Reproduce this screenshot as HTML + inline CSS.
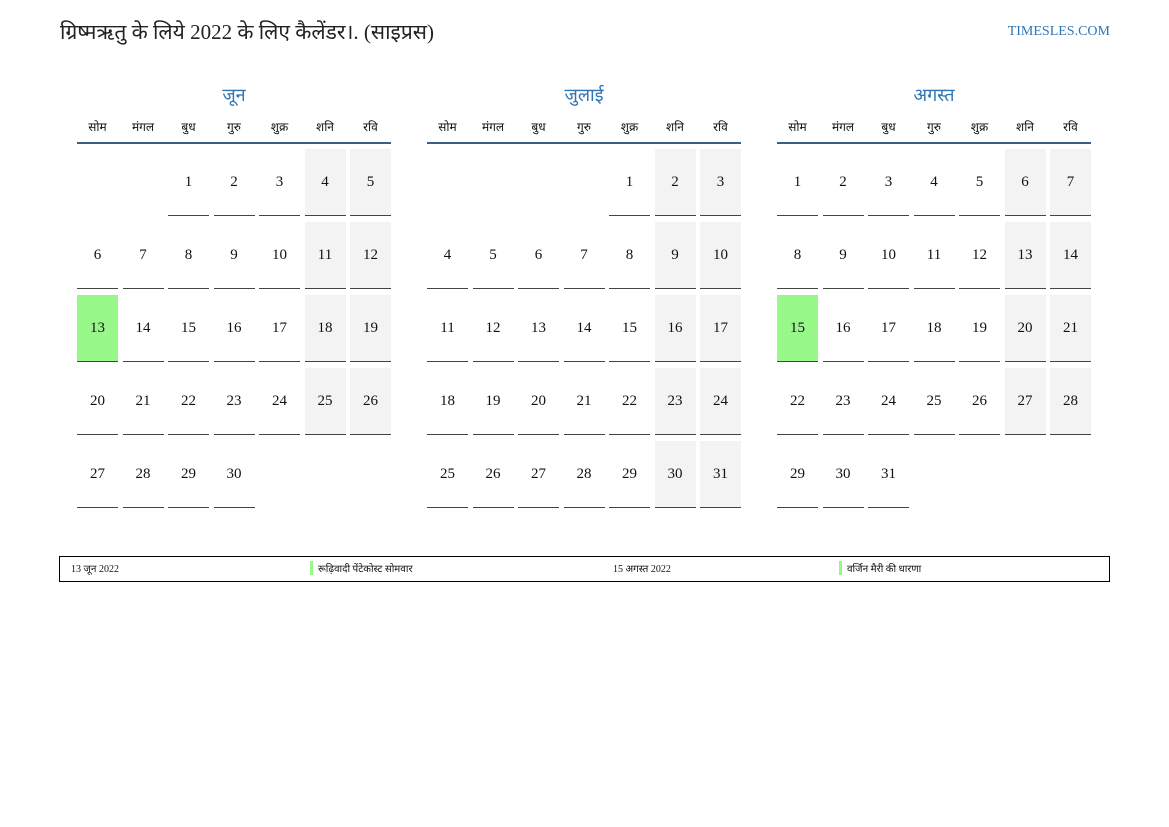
<!DOCTYPE html>
<html><head><meta charset="utf-8"><style>
body{margin:0;width:1169px;height:827px;background:#fff;position:relative;font-family:"Liberation Serif","Noto Serif CJK SC","Noto Sans CJK SC",serif;color:#111}
.t{position:absolute;left:60px;top:18px;font-size:21px;color:#222}
.s{position:absolute;right:59px;top:24px;font-size:14px;color:#2e75b6}
.m{position:absolute;top:82px;width:314px}
.mt{text-align:center;font-size:18px;color:#2e75b6;height:36px;line-height:26px}
.g{display:grid;grid-template-columns:repeat(7,41px);column-gap:4.5px}
.h{font-size:12px;text-align:center;height:24px;line-height:18px;border-bottom:2px solid #3d5c88;margin-bottom:5px;column-gap:4.5px}
.d{row-gap:6px;grid-auto-rows:67px}
.d div{border-bottom:1px solid #444;font-size:15px;text-align:center;line-height:66px;box-sizing:border-box}
.d div.e{border:none}
.d div.w{background:#f3f3f3}
.d div.x{background:#98f98a}
.lg{position:absolute;left:59px;top:556px;width:1049px;height:24px;border:1px solid #000;font-size:10px}
.lg span{position:absolute;top:4px}
.b{border-left:3px solid #98f98a;padding-left:5px}
</style></head><body>
<div class="t">ग्रिष्मऋतु के लिये 2022 के लिए कैलेंडर।. (साइप्रस)</div>
<div class="s">TIMESLES.COM</div>

<div class="m" style="left:77px"><div class="mt">जून</div>
<div class="g h"><span>सोम</span><span>मंगल</span><span>बुध</span><span>गुरु</span><span>शुक्र</span><span>शनि</span><span>रवि</span></div>
<div class="g d">
<div class="e"></div><div class="e"></div><div>1</div><div>2</div><div>3</div><div class="w">4</div><div class="w">5</div>
<div>6</div><div>7</div><div>8</div><div>9</div><div>10</div><div class="w">11</div><div class="w">12</div>
<div class="x">13</div><div>14</div><div>15</div><div>16</div><div>17</div><div class="w">18</div><div class="w">19</div>
<div>20</div><div>21</div><div>22</div><div>23</div><div>24</div><div class="w">25</div><div class="w">26</div>
<div>27</div><div>28</div><div>29</div><div>30</div>
</div></div>

<div class="m" style="left:427px"><div class="mt">जुलाई</div>
<div class="g h"><span>सोम</span><span>मंगल</span><span>बुध</span><span>गुरु</span><span>शुक्र</span><span>शनि</span><span>रवि</span></div>
<div class="g d">
<div class="e"></div><div class="e"></div><div class="e"></div><div class="e"></div><div>1</div><div class="w">2</div><div class="w">3</div>
<div>4</div><div>5</div><div>6</div><div>7</div><div>8</div><div class="w">9</div><div class="w">10</div>
<div>11</div><div>12</div><div>13</div><div>14</div><div>15</div><div class="w">16</div><div class="w">17</div>
<div>18</div><div>19</div><div>20</div><div>21</div><div>22</div><div class="w">23</div><div class="w">24</div>
<div>25</div><div>26</div><div>27</div><div>28</div><div>29</div><div class="w">30</div><div class="w">31</div>
</div></div>

<div class="m" style="left:777px"><div class="mt">अगस्त</div>
<div class="g h"><span>सोम</span><span>मंगल</span><span>बुध</span><span>गुरु</span><span>शुक्र</span><span>शनि</span><span>रवि</span></div>
<div class="g d">
<div>1</div><div>2</div><div>3</div><div>4</div><div>5</div><div class="w">6</div><div class="w">7</div>
<div>8</div><div>9</div><div>10</div><div>11</div><div>12</div><div class="w">13</div><div class="w">14</div>
<div class="x">15</div><div>16</div><div>17</div><div>18</div><div>19</div><div class="w">20</div><div class="w">21</div>
<div>22</div><div>23</div><div>24</div><div>25</div><div>26</div><div class="w">27</div><div class="w">28</div>
<div>29</div><div>30</div><div>31</div>
</div></div>

<div class="lg">
<span style="left:11px">13 जून 2022</span>
<span class="b" style="left:250px">रूढ़िवादी पेंटेकोस्ट सोमवार</span>
<span style="left:553px">15 अगस्त 2022</span>
<span class="b" style="left:779px">वर्जिन मैरी की धारणा</span>
</div>
</body></html>
